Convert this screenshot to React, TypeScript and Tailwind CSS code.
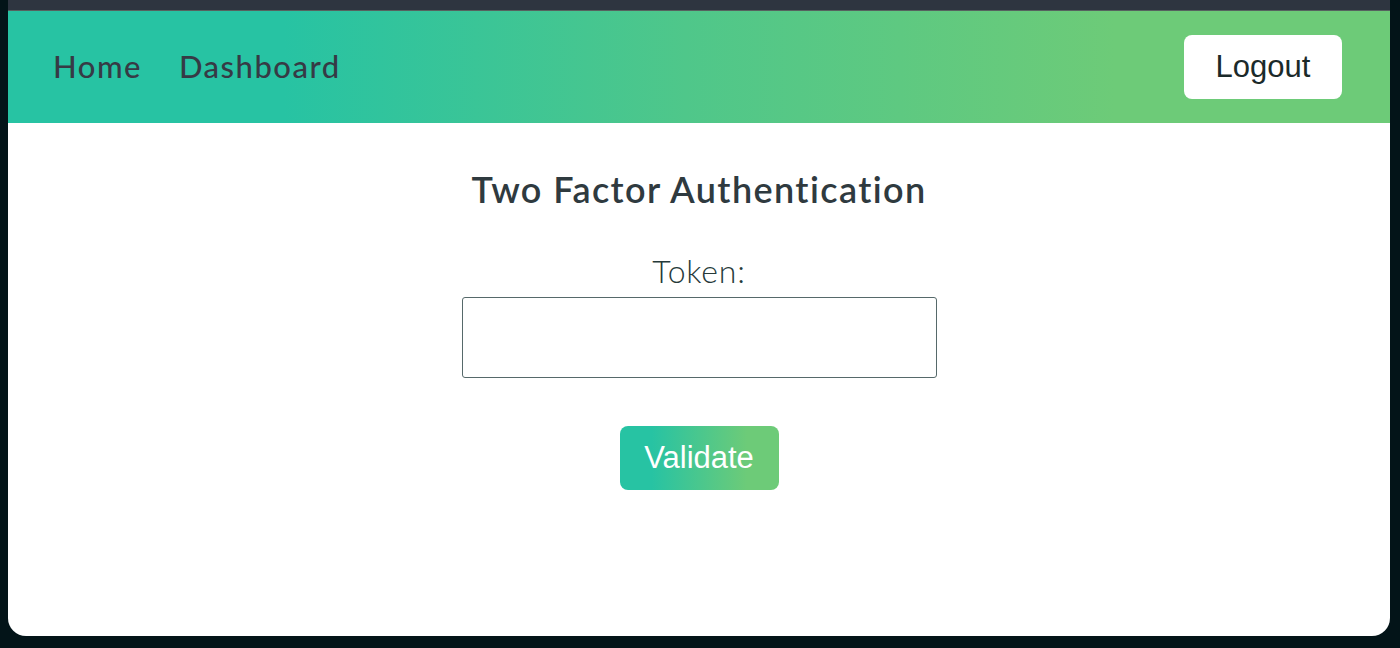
import React from "react";

export default function App() {
  return (
    <div className="w-[1400px] h-[648px] bg-[#031418] overflow-hidden">
      <div className="ml-[8px] w-[1382px] h-[636px] bg-white rounded-b-[18px] overflow-hidden flex flex-col">
        <div className="h-[10px] bg-[#2e3540]" />
        <div className="h-[1px] bg-[#56625f]" />
        <nav
          className="h-[112px] flex items-center justify-between pl-[45px] pr-[48px] bg-[linear-gradient(90deg,#27c3a3_20%,#4fc78a_49%,#6dcb78_80%)]"
        >
          <div
            className="flex items-center gap-[37px] text-[31px] font-medium text-[#363a45] tracking-[1.5px] -mt-[2px]"
            style={{ fontFamily: "Lato, 'Noto Sans', sans-serif" }}
          >
            <a>Home</a>
            <a>Dashboard</a>
          </div>
          <button
            className="w-[158px] h-[64px] bg-white rounded-[8px] text-[31px] text-[#1b2a2a]"
            style={{ fontFamily: "'Liberation Sans', Arial, sans-serif" }}
          >
            Logout
          </button>
        </nav>
        <main className="flex flex-col items-center">
          <h1
            className="mt-[44px] text-[36px] font-semibold text-[#2f3a3f] leading-[44px] tracking-[1.4px]"
            style={{ fontFamily: "Lato, 'Noto Sans', sans-serif" }}
          >
            Two Factor Authentication
          </h1>
          <label
            className="mt-[40px] text-[32px] font-light text-[#263a3a] leading-[40px] tracking-[0.8px]"
            style={{ fontFamily: "Lato, 'Noto Sans', sans-serif" }}
          >
            Token:
          </label>
          <input
            type="text"
            className="mt-[6px] w-[475px] h-[81px] border-[1.5px] border-[#56696a] rounded-[3px] outline-none"
          />
          <button
            className="mt-[48px] w-[159px] h-[64px] rounded-[8px] text-white text-[31px] bg-[linear-gradient(90deg,#27c3a3_20%,#6dcb78_80%)]"
            style={{ fontFamily: "'Liberation Sans', Arial, sans-serif" }}
          >
            Validate
          </button>
        </main>
      </div>
    </div>
  );
}
